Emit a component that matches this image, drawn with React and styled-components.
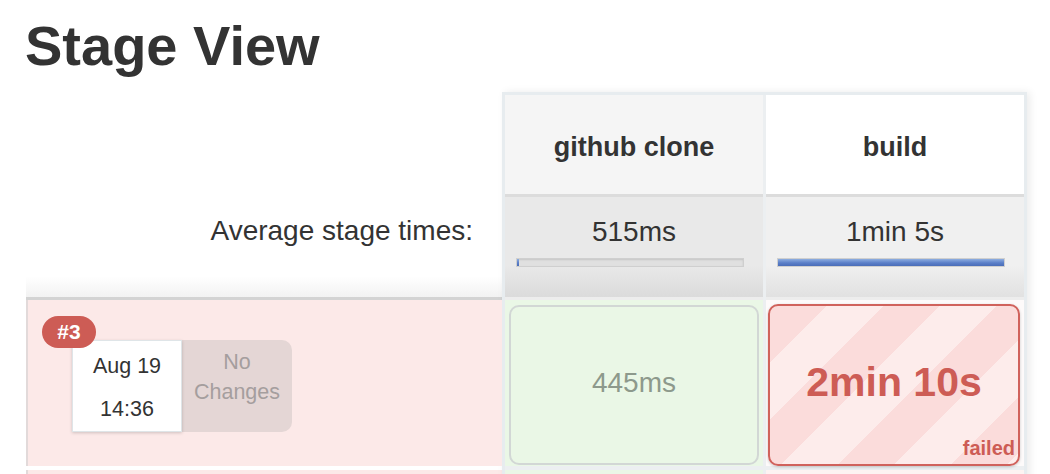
import React from "react";
import styled, { createGlobalStyle } from "styled-components";

const Global = createGlobalStyle`
  html, body { margin: 0; padding: 0; background: #fff; }
  body {
    font-family: "Liberation Sans", Arial, Helvetica, sans-serif;
    color: #333;
    overflow: hidden;
    height: 474px;
  }
`;

const Page = styled.div`
  width: 1050px;
  height: 474px;
  overflow: hidden;
`;

const Title = styled.h1`
  margin: 0;
  padding: 14px 0 0 25px;
  font-size: 56px;
  line-height: 64px;
  font-weight: 700;
  color: #333;
`;

const Table = styled.div`
  display: flex;
  margin: 14px 0 0 26px;
  align-items: flex-start;
`;

const LeftCol = styled.div`
  width: 476px;
  display: flex;
  flex-direction: column;
`;

const HeadSpacer = styled.div`
  height: 102px;
  background: #fff;
`;

const AvgLabel = styled.div`
  height: 106px;
  box-sizing: border-box;
  padding: 21px 29px 0 0;
  text-align: right;
  font-size: 28px;
  line-height: 32px;
  color: #333;
  background: linear-gradient(to bottom, #fff 80%, #f2f2f2 100%);
  border-bottom: 3px solid #d3d3d3;
`;

const RunCell = styled.div`
  position: relative;
  height: 166px;
  box-sizing: border-box;
  background: ${(p) => (p.$failed ? "#fce9e8" : "#f4f4f4")};
  border-left: 2px solid #e2dada;
  display: flex;
  align-items: flex-start;
  padding: 40px 0 0 44px;
`;

const NextRow = styled.div`
  margin-top: 4px;
  height: 40px;
  background: ${(p) => p.$bg};
  border-left: ${(p) => (p.$edge ? "2px solid #e2dada" : "none")};
`;

const Badge = styled.div`
  position: absolute;
  left: 14px;
  top: 16px;
  z-index: 2;
  width: 54px;
  height: 32px;
  border-radius: 16px;
  background: #cd5c55;
  color: #fff;
  font-weight: 700;
  font-size: 21px;
  line-height: 32px;
  text-align: center;
`;

const DateCard = styled.div`
  width: 110px;
  height: 92px;
  box-sizing: border-box;
  background: #fff;
  border: 1px solid #dfe5e8;
  box-shadow: 0 1px 3px rgba(0, 0, 0, 0.18);
  display: flex;
  flex-direction: column;
  align-items: center;
  padding-top: 10px;
  gap: 13px;
  font-size: 21.5px;
  line-height: 30px;
  color: #333;
  position: relative;
  z-index: 1;
`;

const ChangesBox = styled.div`
  width: 110px;
  height: 92px;
  box-sizing: border-box;
  background: #e4d6d5;
  border-radius: 0 10px 10px 0;
  padding-top: 7px;
  text-align: center;
  font-size: 21.5px;
  line-height: 30px;
  color: #a59e9e;
`;

const Stages = styled.div`
  display: flex;
  gap: 3px;
  background: #eceff1;
  border: 3px solid #e7ecef;
  border-bottom: none;
  box-shadow: 3px 0 8px rgba(0, 0, 0, 0.08);
`;

const StageCol = styled.div`
  width: 258px;
  display: flex;
  flex-direction: column;
`;

const StageHead = styled.div`
  height: 99px;
  box-sizing: border-box;
  padding-top: 6px;
  display: flex;
  align-items: center;
  justify-content: center;
  background: ${(p) => (p.$alt ? "#f5f5f5" : "#fff")};
  font-weight: 700;
  font-size: 27px;
  color: #333;
`;

const AvgCell = styled.div`
  height: 106px;
  box-sizing: border-box;
  border-top: 3px solid #dcdcdc;
  border-bottom: 3px solid #ededed;
  padding-top: 19px;
  background: ${(p) =>
    p.$alt
      ? "linear-gradient(to bottom, #e9e9e9 68%, #dbdbdb 100%)"
      : "linear-gradient(to bottom, #f0f0f0 68%, #e1e1e1 100%)"};
  display: flex;
  flex-direction: column;
  align-items: center;
`;

const AvgTime = styled.div`
  font-size: 28px;
  line-height: 32px;
  color: #333;
`;

const Bar = styled.div`
  align-self: flex-start;
  margin: 10px 0 0 11px;
  width: 228px;
  height: 9px;
  box-sizing: border-box;
  background: #e0e0e0;
  border: 1px solid #cfcfcf;
  box-shadow: inset 0 1px 2px rgba(0, 0, 0, 0.12);
  overflow: hidden;
`;

const Fill = styled.div`
  height: 100%;
  background: linear-gradient(to bottom, #8eaee0 0%, #5b7fc8 55%, #4a6db8 100%);
`;

const CellWrap = styled.div`
  height: 166px;
  box-sizing: border-box;
  background: ${(p) => (p.$status === "success" ? "#eaf7e6" : "#fdfafa")};
  padding: ${(p) => (p.$status === "success" ? "5px 4px 1px 4px" : "4px 4px 0 2px")};
  display: flex;
`;

const StageBox = styled.div`
  position: relative;
  flex: 1;
  box-sizing: border-box;
  border-radius: 10px;
  display: flex;
  align-items: center;
  justify-content: center;
  padding-bottom: 5px;
  border: 2px solid ${(p) => (p.$status === "success" ? "#d2d7d5" : "#d0625c")};
  background: ${(p) =>
    p.$status === "success"
      ? "#eaf7e6"
      : "repeating-linear-gradient(135deg, #fbdcdb 0 40px, #fdeceb 40px 80px)"};
  box-shadow: ${(p) => (p.$status === "success" ? "none" : "0 1px 3px rgba(0,0,0,0.2)")};
  color: ${(p) => (p.$status === "success" ? "#8d998c" : "#cd5c55")};
  font-size: ${(p) => (p.$status === "success" ? "28px" : "41px")};
  font-weight: ${(p) => (p.$status === "success" ? 400 : 700)};
`;

const StatusTag = styled.span`
  position: absolute;
  right: 3px;
  bottom: 6px;
  font-size: 20px;
  font-weight: 700;
  line-height: 20px;
  color: #cd5c55;
`;

const NextStage = styled.div`
  margin-top: 4px;
  height: 40px;
  background: ${(p) => p.$bg};
`;

const stages = [
  { name: "github clone", avg: "515ms", pct: 1, time: "445ms", status: "success", alt: true },
  { name: "build", avg: "1min 5s", pct: 100, time: "2min 10s", status: "failed", alt: false },
];

export default function App() {
  return (
    <Page>
      <Global />
      <Title>Stage View</Title>
      <Table>
        <LeftCol>
          <HeadSpacer />
          <AvgLabel>Average stage times:</AvgLabel>
          <RunCell $failed>
            <Badge>#3</Badge>
            <DateCard>
              <span>Aug 19</span>
              <span>14:36</span>
            </DateCard>
            <ChangesBox>
              No
              <br />
              Changes
            </ChangesBox>
          </RunCell>
          <NextRow $bg="#fce9e8" $edge />
        </LeftCol>
        <Stages>
          {stages.map((s) => (
            <StageCol key={s.name}>
              <StageHead $alt={s.alt}>{s.name}</StageHead>
              <AvgCell $alt={s.alt}>
                <AvgTime>{s.avg}</AvgTime>
                <Bar>
                  <Fill style={{ width: s.pct === 1 ? "2px" : `${s.pct}%` }} />
                </Bar>
              </AvgCell>
              <CellWrap $status={s.status}>
                <StageBox $status={s.status}>
                  {s.time}
                  {s.status === "failed" && <StatusTag>failed</StatusTag>}
                </StageBox>
              </CellWrap>
              <NextStage $bg={s.status === "success" ? "#eaf7e6" : "#fdf3f2"} />
            </StageCol>
          ))}
        </Stages>
      </Table>
    </Page>
  );
}
